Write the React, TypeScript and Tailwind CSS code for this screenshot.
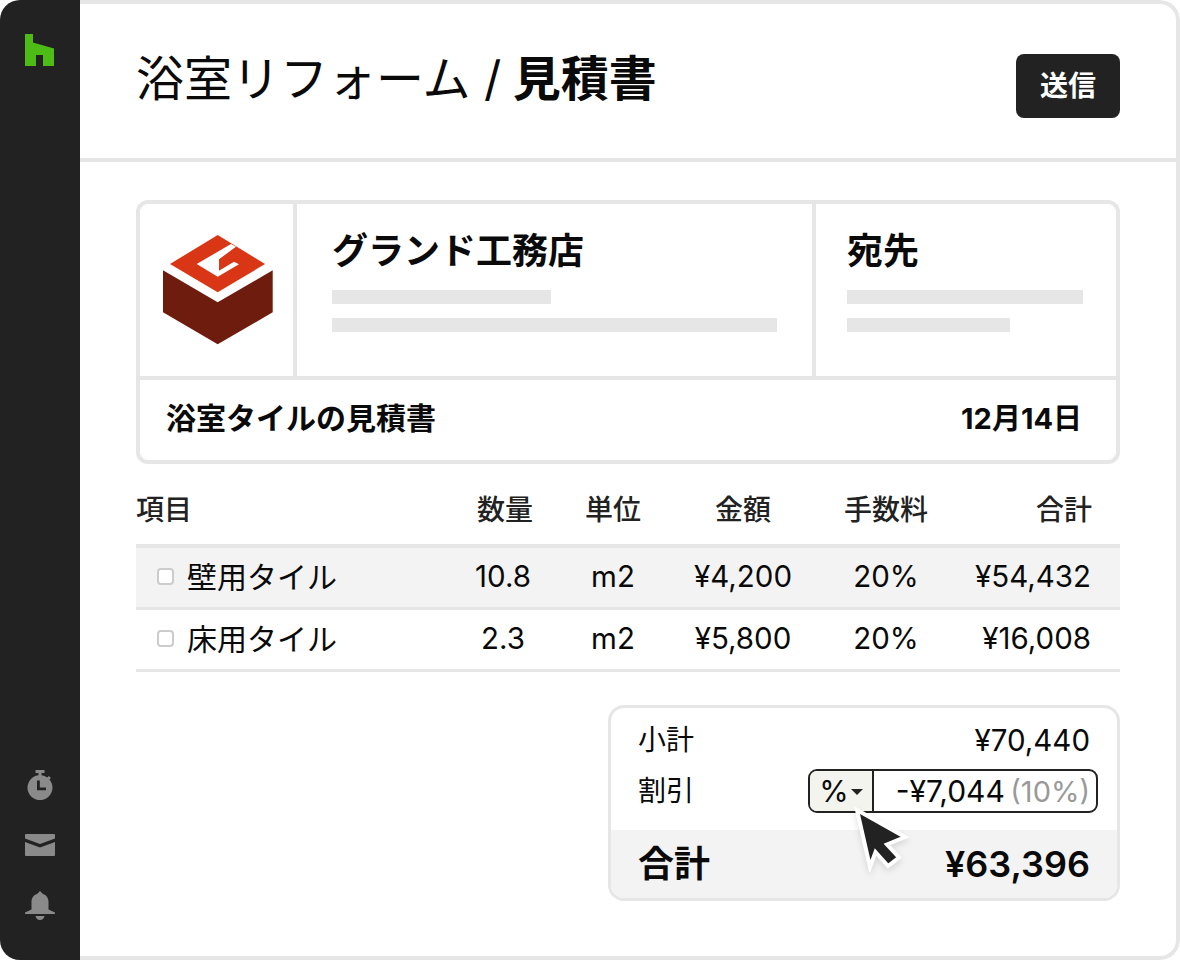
const font = "font-['Inter','Noto_Sans_CJK_JP',sans-serif]";

function Row({ name, qty, unit, price, fee, total, shaded }: { name: string; qty: string; unit: string; price: string; fee: string; total: string; shaded?: boolean }) {
  return (
    <div className={`flex h-[62px] items-center border-b-[3px] border-[#e6e6e6] pb-[2px] text-[29.500px] leading-none text-[#0a0a0a] ${shaded ? "bg-[#f3f3f3]" : ""}`}>
      <div className="flex w-[309px] items-center pl-[21px]">
        <span className="mr-[13px] h-[17px] w-[17px] rounded-[4px] border-2 border-[#ccc] bg-white" />
        <span className="text-[30px]">{name}</span>
      </div>
      <div className="w-[120px] pr-[4px] text-center">{qty}</div>
      <div className="w-[96px] text-center">{unit}</div>
      <div className="w-[164px] text-center">{price}</div>
      <div className="w-[122px] text-center">{fee}</div>
      <div className="flex-1 pr-[29px] text-right">{total}</div>
    </div>
  );
}

export default function App() {
  return (
    <div className={`relative flex h-[960px] w-[1180px] overflow-hidden rounded-[20px] bg-white ${font}`}>
      <aside className="flex w-[80px] shrink-0 flex-col items-center bg-[#222] pb-[40px] pt-[34px]">
        <svg width="30" height="32" viewBox="0 0 30 32" fill="#4dbc15">
          <path d="M0 0h8v8.500l21 6V32H18V21H11v11H0z" />
        </svg>
        <div className="flex-1" />
        <svg width="28" height="30" viewBox="0 0 28 30" fill="#8a8a8a" className="mb-[34px]">
          <path d="M9.500 0h9v3h-3v2.200a12.500 12.500 0 0 1 5.800 2.300l1.600-1.600 2 2-1.500 1.500A12.500 12.500 0 1 1 12.500 5.200V3h-3z" />
          <path d="M11 10.500h2.800v7H20v2.700h-9z" fill="#222" />
        </svg>
        <svg width="30" height="22" viewBox="0 0 30 22" fill="#8a8a8a" className="mb-[35px]">
          <path d="M1 0h28a1 1 0 0 1 1 1v3.500L15 10 0 4.500V1a1 1 0 0 1 1-1z" />
          <path d="M0 8l15 5.500L30 8v13a1 1 0 0 1-1 1H1a1 1 0 0 1-1-1z" />
        </svg>
        <svg width="30" height="29" viewBox="0 0 30 29" fill="#8a8a8a">
          <path d="M15 0l3 3c3.500 1 5.500 4 5.500 8v7.500L30 21.500V23H0v-1.500l6.500-3V11c0-4 2-7 5.500-8z" />
          <path d="M10.500 25h9c-.5 2.500-2.200 4-4.500 4s-4-1.500-4.500-4z" />
        </svg>
      </aside>

      <main className="flex min-w-0 flex-1 flex-col rounded-r-[20px] border-y-4 border-r-4 border-[#e6e6e6]">
        <header className="flex h-[158px] shrink-0 items-center justify-between border-b-4 border-[#e6e6e6] pb-[4px] pl-[56px] pr-[56px]">
          <h1 className="text-[48px] font-normal leading-none text-[#0a0a0a]">
            浴室リフォーム / <span className="ml-[-2px] font-bold">見積書</span>
          </h1>
          <button className="mt-[14px] h-[64px] w-[104px] rounded-[8px] bg-[#222] text-[28px] font-bold text-white">送信</button>
        </header>

        <div className="flex flex-1 flex-col pl-[56px] pr-[56px] pt-[38px]">
          <section className="h-[264px] rounded-[12px] border-4 border-[#e6e6e6]">
            <div className="flex h-[176px] border-b-[4px] border-[#e6e6e6]">
              <div className="flex w-[157px] shrink-0 items-center justify-center border-r-4 border-[#e6e6e6] pl-[3px]">
                <svg width="110" height="110" viewBox="163 235 110 110">
                  <path d="M217.700 235L265 264l-47.300 28.300L170 264z" fill="#d93616" />
                  <path d="M163 270.300l54.700 32 55-32v42l-55 32-54.700-32z" fill="#6e1c0e" />
                  <path d="M231 244L196.700 264l21 12.700L239 264.300l-5-2.600-15 9V259.300L236 246.700z" fill="#fff" />
                </svg>
              </div>
              <div className="w-[519px] shrink-0 border-r-4 border-[#e6e6e6] pl-[35px] pr-[35px] pt-[24px]">
                <h2 className="text-[36px] font-bold leading-[46px] text-[#0a0a0a]">グランド工務店</h2>
                <div className="mt-[16px] h-[14px] w-[219px] bg-[#e6e6e6]" />
                <div className="mt-[14px] h-[14px] w-[445px] bg-[#e6e6e6]" />
              </div>
              <div className="flex-1 pl-[31px] pr-[33px] pt-[24px]">
                <h2 className="text-[36px] font-bold leading-[46px] text-[#0a0a0a]">宛先</h2>
                <div className="mt-[16px] h-[14px] w-[236px] bg-[#e6e6e6]" />
                <div className="mt-[14px] h-[14px] w-[163px] bg-[#e6e6e6]" />
              </div>
            </div>
            <div className="flex h-[80px] items-center justify-between pl-[26px] pr-[34px] pb-[4px] text-[30px] font-bold leading-none text-[#0a0a0a]">
              <span>浴室タイルの見積書</span>
              <span className="text-[29px]">12月14日</span>
            </div>
          </section>

          <div className="mt-[24px] flex h-[60px] items-center border-b-[4px] border-[#e6e6e6] pb-[12px] text-[28px] font-medium leading-none text-[#222]">
            <div className="w-[309px]">項目</div>
            <div className="w-[120px] text-center">数量</div>
            <div className="w-[96px] text-center">単位</div>
            <div className="w-[164px] text-center">金額</div>
            <div className="w-[122px] text-center">手数料</div>
            <div className="flex-1 pr-[28px] text-right">合計</div>
          </div>
          <Row name="壁用タイル" qty="10.8" unit="m2" price="¥4,200" fee="20%" total="¥54,432" shaded />
          <Row name="床用タイル" qty="2.3" unit="m2" price="¥5,800" fee="20%" total="¥16,008" />

          <section className="relative ml-auto mt-[33px] flex h-[196px] w-[512px] flex-col overflow-hidden rounded-[16px] border-[3px] border-[#e6e6e6] text-[#0a0a0a]">
            <div className="flex h-[61px] items-center justify-between pl-[27px] pr-[27px] pt-[3px] text-[28px]">
              <span>小計</span>
              <span className="text-[29.500px]">¥70,440</span>
            </div>
            <div className="flex h-[61px] items-start justify-between pl-[27px] pr-[19px] pt-[0px] text-[28px]">
              <span className="leading-[44px]">割引</span>
              <div className="flex h-[44px] w-[290px] overflow-hidden rounded-[9px] border-2 border-[#222] text-[30px] leading-none">
                <div className="flex w-[64px] items-center justify-center gap-[2px] border-r-2 border-[#222] bg-[#f4f4ef]">
                  <span>%</span>
                  <span className="mt-[2px] h-0 w-0 border-x-[6px] border-t-[6px] border-x-transparent border-t-[#222]" />
                </div>
                <div className="flex flex-1 items-center justify-end whitespace-pre pr-[6px]">
                  -¥7,044 <span className="ml-[-3px] text-[29px] text-[#999]">(10%)</span>
                </div>
              </div>
            </div>
            <div className="flex flex-1 items-center justify-between bg-[#f3f3f3] pl-[27px] pr-[27px]">
              <span className="text-[36px] font-bold">合計</span>
              <span className="text-[36px] font-semibold">¥63,396</span>
            </div>
            <svg width="70" height="70" viewBox="845 803 70 70" className="absolute left-[234px] top-[94px] drop-shadow-md">
              <path d="M857 811L905 838 887 845.500 899 858.500 888 867 875.500 853 870 868z" fill="#222" stroke="#fff" strokeWidth="4" strokeLinejoin="miter" />
            </svg>
          </section>
        </div>
      </main>
    </div>
  );
}
